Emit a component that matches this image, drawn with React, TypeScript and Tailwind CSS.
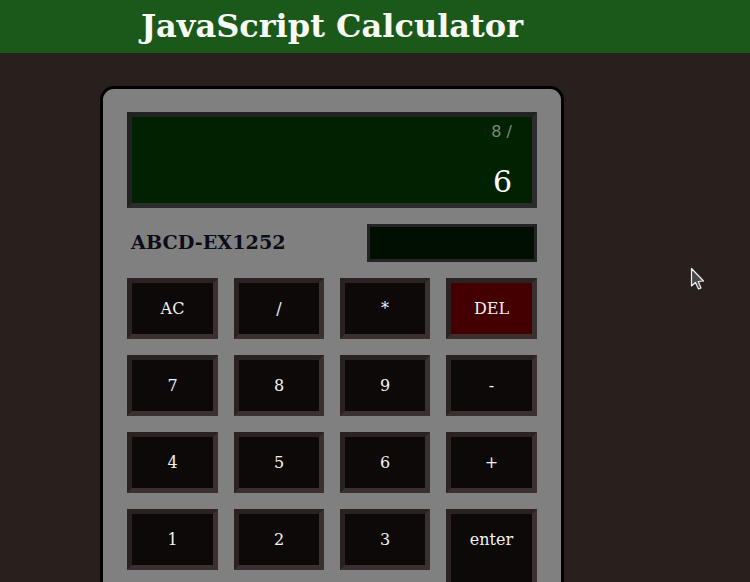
import React from 'react';

type Key = { label: string; tone?: 'red'; tall?: boolean };

const keys: Key[] = [
  { label: 'AC' }, { label: '/' }, { label: '*' }, { label: 'DEL', tone: 'red' },
  { label: '7' }, { label: '8' }, { label: '9' }, { label: '-' },
  { label: '4' }, { label: '5' }, { label: '6' }, { label: '+' },
  { label: '1' }, { label: '2' }, { label: '3' }, { label: 'enter', tall: true },
];

function CalcKey({ k }: { k: Key }) {
  return (
    <button
      className={
        'flex items-start justify-center pt-[15px] border-[5px] border-t-[#2a2121] border-l-[#2a2121] border-b-[#3a3030] border-r-[#3a3030] text-[16px] leading-[22px] text-[#f2f2f2] ' +
        (k.tone === 'red' ? 'bg-[#440000] ' : 'bg-[#0d0909] ') +
        (k.tall ? 'row-span-2' : '')
      }
    >
      {k.label}
    </button>
  );
}

function Cursor() {
  return (
    <svg className="absolute left-[690px] top-[267px]" width="16" height="25" viewBox="0 0 16 25">
      <path d="M1.5 1.5 L1.5 19 L5.5 15.5 L8.5 22 L11 21 L8.2 14.5 L13.5 14 Z" fill="#4a4a4a" stroke="#f2f2f2" strokeWidth="1.2" strokeLinejoin="round" />
    </svg>
  );
}

export default function App() {
  return (
    <div className="relative w-[750px] h-[582px] overflow-hidden bg-[#28201d] font-['DejaVu_Serif',serif]">
      <header className="h-[53px] bg-[#1b591a]">
        <h1 className="ml-[100px] w-[464px] text-center text-[32px] leading-[53px] font-bold text-[#f8f8f4]">
          JavaScript Calculator
        </h1>
      </header>

      <div className="ml-[100px] mt-[33px] w-[464px] rounded-[14px] border-[3px] border-black bg-[#808080] px-[24px] pt-[23px] pb-[24px]">
        <div className="h-[96px] border-[5px] border-t-[#222222] border-l-[#222222] border-b-[#2c2c2c] border-r-[#2c2c2c] bg-[#002200] pr-[20px] flex flex-col items-end">
          <div className="mt-[5px] font-['DejaVu_Sans',sans-serif] text-[16px] leading-[20px] text-[#7a8a78]">8 /</div>
          <div className="mt-[23px] text-[30px] leading-[34px] text-white">6</div>
        </div>

        <div className="mt-[16px] flex items-center justify-between pl-[4px]">
          <span className="text-[19.2px] font-bold text-[#0c0c18]">ABCD-EX1252</span>
          <div className="w-[170px] h-[38px] border-[3px] border-[#242424] bg-[#000f00]" />
        </div>

        <div className="mt-[16px] grid grid-cols-[91px_90px_90px_91px] auto-rows-[61px] gap-x-[16px] gap-y-[16px]">
          {keys.map((k) => (
            <CalcKey key={k.label} k={k} />
          ))}
        </div>
      </div>

      <Cursor />
    </div>
  );
}
